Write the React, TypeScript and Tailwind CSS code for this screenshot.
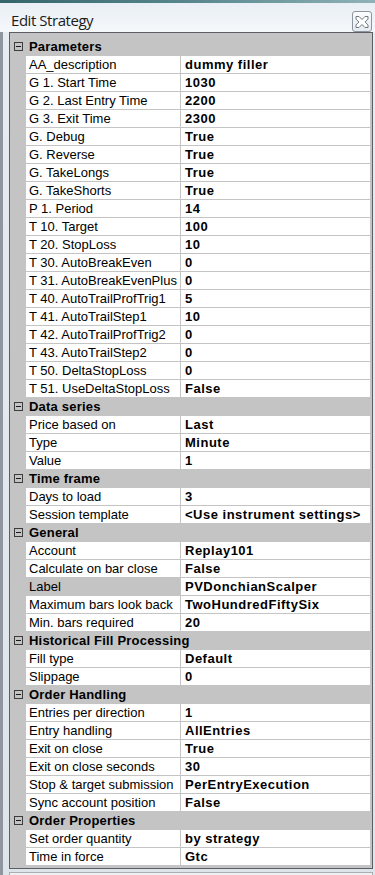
import React from "react";

type Row = { name: string; value: string; shaded?: boolean };
type Section = { title: string; rows: Row[] };

const sections: Section[] = [
  {
    title: "Parameters",
    rows: [
      { name: "AA_description", value: "dummy filler" },
      { name: "G 1. Start Time", value: "1030" },
      { name: "G 2. Last Entry Time", value: "2200" },
      { name: "G 3. Exit Time", value: "2300" },
      { name: "G. Debug", value: "True" },
      { name: "G. Reverse", value: "True" },
      { name: "G. TakeLongs", value: "True" },
      { name: "G. TakeShorts", value: "True" },
      { name: "P 1. Period", value: "14" },
      { name: "T 10. Target", value: "100" },
      { name: "T 20. StopLoss", value: "10" },
      { name: "T 30. AutoBreakEven", value: "0" },
      { name: "T 31. AutoBreakEvenPlus", value: "0" },
      { name: "T 40. AutoTrailProfTrig1", value: "5" },
      { name: "T 41. AutoTrailStep1", value: "10" },
      { name: "T 42. AutoTrailProfTrig2", value: "0" },
      { name: "T 43. AutoTrailStep2", value: "0" },
      { name: "T 50. DeltaStopLoss", value: "0" },
      { name: "T 51. UseDeltaStopLoss", value: "False" },
    ],
  },
  {
    title: "Data series",
    rows: [
      { name: "Price based on", value: "Last" },
      { name: "Type", value: "Minute" },
      { name: "Value", value: "1" },
    ],
  },
  {
    title: "Time frame",
    rows: [
      { name: "Days to load", value: "3" },
      { name: "Session template", value: "<Use instrument settings>" },
    ],
  },
  {
    title: "General",
    rows: [
      { name: "Account", value: "Replay101" },
      { name: "Calculate on bar close", value: "False" },
      { name: "Label", value: "PVDonchianScalper", shaded: true },
      { name: "Maximum bars look back", value: "TwoHundredFiftySix" },
      { name: "Min. bars required", value: "20" },
    ],
  },
  {
    title: "Historical Fill Processing",
    rows: [
      { name: "Fill type", value: "Default" },
      { name: "Slippage", value: "0" },
    ],
  },
  {
    title: "Order Handling",
    rows: [
      { name: "Entries per direction", value: "1" },
      { name: "Entry handling", value: "AllEntries" },
      { name: "Exit on close", value: "True" },
      { name: "Exit on close seconds", value: "30" },
      { name: "Stop & target submission", value: "PerEntryExecution" },
      { name: "Sync account position", value: "False" },
    ],
  },
  {
    title: "Order Properties",
    rows: [
      { name: "Set order quantity", value: "by strategy" },
      { name: "Time in force", value: "Gtc" },
    ],
  },
];

function CloseButton() {
  return (
    <div className="mt-[8px] mr-[3px] h-[21px] w-[20px] rounded-[3px] border border-[#8d949e] bg-gradient-to-b from-[#fbfcfd] to-[#e6ebf0] flex items-center justify-center">
      <svg width="16" height="14" viewBox="0 0 16 14">
        <path
          d="M2 1.5h3l3 3 3-3h3v2.6l-2.9 2.9 2.9 2.9v2.6h-3l-3-3-3 3h-3v-2.6l2.9-2.9-2.9-2.9z"
          fill="#fff"
          stroke="#6f7783"
          strokeWidth="1"
        />
      </svg>
    </div>
  );
}

function CategoryRow({ title }: { title: string }) {
  return (
    <div className="flex h-[18px] items-center">
      <div className="w-[16px] h-full flex items-start pt-[4px] pl-[4px]">
        <div className="h-[9px] w-[9px] border border-[#3c3c3c] bg-[#c4c4c4] flex items-center justify-center">
          <div className="h-px w-[5px] bg-[#1a1a1a]" />
        </div>
      </div>
      <span className="pl-[3px] text-[13px] font-bold text-black leading-[18px] tracking-[0.2px]">{title}</span>
    </div>
  );
}

function PropRow({ row }: { row: Row }) {
  return (
    <div className="flex h-[18px]">
      <div className="w-[16px] shrink-0" />
      <div
        className={`w-[155px] shrink-0 border-r border-b border-[#c4c4c4] pl-[3px] text-[13px] leading-[17px] text-black whitespace-nowrap overflow-hidden ${
          row.shaded ? "bg-[#c4c4c4]" : "bg-white"
        }`}
      >
        {row.name}
      </div>
      <div className="flex-1 border-b border-[#c4c4c4] bg-white pl-[4px] text-[13px] font-bold leading-[17px] tracking-[0.5px] text-black whitespace-nowrap overflow-hidden">
        {row.value}
      </div>
    </div>
  );
}

export default function App() {
  return (
    <div className="w-[375px] h-[875px] overflow-hidden flex flex-col bg-[#e2e8ee] font-['Liberation_Sans',Arial,sans-serif]">
      <div className="h-[3px] bg-gradient-to-r from-[#35656c] via-[#58868d] to-[#8fb2b8]" />
      <div className="h-[29px] flex items-start justify-between bg-gradient-to-b from-[#e9eff5] to-[#f5f8fb]">
        <span className="pl-[11px] pt-[8px] text-[15px] leading-[18px] text-[#1b1b1b] font-['Open_Sans',sans-serif] tracking-[-0.45px]">
          Edit Strategy
        </span>
        <CloseButton />
      </div>
      <div className="flex-1 flex border-l-[3px] border-[#8f969d] pl-[6px] bg-gradient-to-b from-[#e6ecf1] to-[#dde4ea]">
        <div className="flex flex-col">
          <div className="w-[364px] border border-[#5b5e62] bg-[#c4c4c4] pt-[5px] pr-[2px] pb-[2px]">
            {sections.map((s) => (
              <div key={s.title}>
                <CategoryRow title={s.title} />
                {s.rows.map((r) => (
                  <PropRow key={r.name} row={r} />
                ))}
              </div>
            ))}
          </div>
          <div className="mt-[3px] flex-1 border border-b-0 border-[#a9afb5] bg-[#f0f0f0]" />
        </div>
      </div>
    </div>
  );
}
